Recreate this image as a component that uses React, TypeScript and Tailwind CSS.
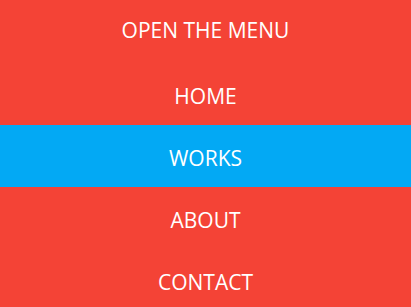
const items = ["HOME", "WORKS", "ABOUT", "CONTACT"];

export default function App() {
  return (
    <div className="w-[411px] h-[307px] overflow-hidden bg-[#f44336] font-['Open_Sans',sans-serif] font-medium text-white text-[21px] leading-none">
      <div className="h-[63px] pb-[3px] flex items-center justify-center">OPEN THE MENU</div>
      <ul className="flex flex-col">
        {items.map((item) => (
          <li
            key={item}
            className={
              item === "WORKS"
                ? "h-[62px] pt-[4px] flex items-center justify-center bg-[#03a9f4]"
                : "h-[62px] pt-[4px] flex items-center justify-center"
            }
          >
            {item}
          </li>
        ))}
      </ul>
    </div>
  );
}
